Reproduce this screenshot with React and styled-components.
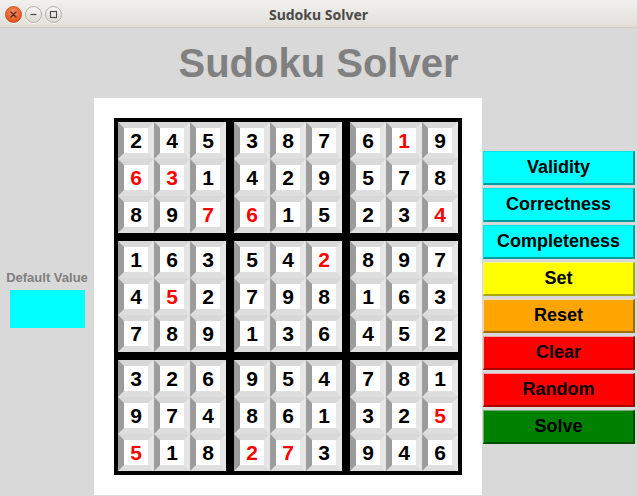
import React from "react";
import styled, { createGlobalStyle } from "styled-components";

const GlobalStyle = createGlobalStyle`
  html, body {
    margin: 0;
    padding: 0;
    width: 637px;
    height: 496px;
    overflow: hidden;
    background: #d9d9d9;
  }
  * { box-sizing: border-box; }
`;

const Window = styled.div`
  width: 637px;
  height: 496px;
  display: flex;
  flex-direction: column;
  background: #d9d9d9;
  font-family: "Liberation Sans", Arial, sans-serif;
`;

const TitleBar = styled.div`
  height: 28px;
  flex: none;
  display: grid;
  grid-template-columns: 1fr auto 1fr;
  align-items: center;
  background: linear-gradient(#f1f0ee, #e2dfda);
  border-bottom: 1px solid #cfcbc4;
`;

const Controls = styled.div`
  display: flex;
  gap: 3px;
  padding-left: 5px;
  padding-top: 2px;
`;

const CircleButton = styled.div`
  width: 17px;
  height: 17px;
  border-radius: 50%;
  display: flex;
  align-items: center;
  justify-content: center;
  background: ${(p) =>
    p.$close
      ? "radial-gradient(circle at 50% 35%, #f58f62, #e7561f 75%)"
      : "linear-gradient(#f7f6f4, #dcd8d2)"};
  border: 1px solid ${(p) => (p.$close ? "#c9521f" : "#b3aea6")};
  box-shadow: 0 1px 0 rgba(255, 255, 255, 0.7);
`;

const WindowTitle = styled.div`
  font-family: "Noto Sans", "DejaVu Sans", sans-serif;
  font-weight: 700;
  font-size: 14px;
  color: #4c4a47;
  padding-top: 1px;
`;

const Heading = styled.h1`
  margin: 0;
  padding: 12px 0 12px;
  height: 70px;
  line-height: 46px;
  text-align: center;
  font-size: 40px;
  font-weight: 700;
  color: #808080;
`;

const Main = styled.div`
  flex: 1;
  display: flex;
  align-items: stretch;
  min-height: 0;
`;

const SideColumn = styled.div`
  width: 94px;
  flex: none;
  display: flex;
  flex-direction: column;
  align-items: center;
  justify-content: center;
  padding-top: 4px;
`;

const SideLabel = styled.div`
  font-size: 13px;
  line-height: 15px;
  font-weight: 700;
  color: #808080;
  margin-bottom: 5px;
`;

const Swatch = styled.div`
  width: 75px;
  height: 38px;
  background: #00ffff;
`;

const BoardPanel = styled.div`
  width: 388px;
  flex: none;
  background: #ffffff;
  padding: 20px;
  margin-bottom: 1px;
`;

const Board = styled.div`
  display: grid;
  grid-template-columns: repeat(3, 108px);
  grid-template-rows: repeat(3, 111px);
  gap: 8px;
  padding: 4px;
  background: #000000;
  width: 348px;
`;

const Box = styled.div`
  display: grid;
  grid-template-columns: repeat(3, 36px);
  grid-template-rows: repeat(3, 37px);
`;

const Cell = styled.div`
  border-style: solid;
  border-width: 6px;
  border-top-color: #d8d8d8;
  border-left-color: #9c9c9c;
  border-right-color: #e6e6e6;
  border-bottom-color: #dedede;
  background: #ffffff;
  display: flex;
  align-items: center;
  justify-content: center;
  font-size: 21px;
  font-weight: 700;
  color: ${(p) => (p.$given ? "#000000" : "#ff0000")};
`;

const ButtonColumn = styled.div`
  width: 152px;
  flex: none;
  margin-left: 1px;
  display: flex;
  flex-direction: column;
  justify-content: center;
  gap: 3px;
  padding-top: 1px;
`;

const tones = {
  cyan: { bg: "#00ffff", light: "#00e6e6", dark: "#009c9c" },
  yellow: { bg: "#ffff00", light: "#f4f48a", dark: "#a8a800" },
  orange: { bg: "#ffa500", light: "#f2dba8", dark: "#a46a00" },
  red: { bg: "#ff0000", light: "#f3a6a6", dark: "#a80000" },
  green: { bg: "#008000", light: "#6fae6f", dark: "#004d00" },
};

const ActionButton = styled.button`
  height: 34px;
  width: 152px;
  margin: 0;
  padding: 0;
  font-family: "Liberation Sans", Arial, sans-serif;
  font-size: 18px;
  font-weight: 700;
  color: #000000;
  background: ${(p) => tones[p.$tone].bg};
  border-style: solid;
  border-width: 1px 2px 2px 1px;
  border-top-color: ${(p) => tones[p.$tone].light};
  border-left-color: ${(p) => tones[p.$tone].light};
  border-right-color: ${(p) => tones[p.$tone].dark};
  border-bottom-color: ${(p) => tones[p.$tone].dark};
  cursor: pointer;
`;

const grid = [
  "245387619",
  "631429578",
  "897615234",
  "163542897",
  "452798163",
  "789136452",
  "326954781",
  "974861325",
  "518273946",
];

const red = new Set([
  "0,7", "1,0", "1,1", "2,2", "2,3", "2,8", "3,5", "4,1", "7,8", "8,0", "8,3", "8,4",
]);

const buttons = [
  ["Validity", "cyan"],
  ["Correctness", "cyan"],
  ["Completeness", "cyan"],
  ["Set", "yellow"],
  ["Reset", "orange"],
  ["Clear", "red"],
  ["Random", "red"],
  ["Solve", "green"],
];

function CloseGlyph() {
  return (
    <svg width="9" height="9" viewBox="0 0 9 9">
      <path d="M2 2 L7 7 M7 2 L2 7" stroke="#5a2410" strokeWidth="1.3" strokeLinecap="round" />
    </svg>
  );
}

function MinGlyph() {
  return (
    <svg width="9" height="9" viewBox="0 0 9 9">
      <path d="M1.5 4.5 H7.5" stroke="#4a4844" strokeWidth="1.2" />
    </svg>
  );
}

function MaxGlyph() {
  return (
    <svg width="9" height="9" viewBox="0 0 9 9">
      <rect x="1.5" y="1.5" width="6" height="6" fill="none" stroke="#4a4844" strokeWidth="1.1" />
    </svg>
  );
}

export default function App() {
  const boxes = [];
  for (let br = 0; br < 3; br++) {
    for (let bc = 0; bc < 3; bc++) {
      const cells = [];
      for (let i = 0; i < 3; i++) {
        for (let j = 0; j < 3; j++) {
          const r = br * 3 + i;
          const c = bc * 3 + j;
          cells.push(
            <Cell key={`${r}-${c}`} $given={!red.has(`${r},${c}`)}>
              {grid[r][c]}
            </Cell>
          );
        }
      }
      boxes.push(<Box key={`${br}-${bc}`}>{cells}</Box>);
    }
  }

  return (
    <>
      <GlobalStyle />
      <Window>
        <TitleBar>
          <Controls>
            <CircleButton $close>
              <CloseGlyph />
            </CircleButton>
            <CircleButton>
              <MinGlyph />
            </CircleButton>
            <CircleButton>
              <MaxGlyph />
            </CircleButton>
          </Controls>
          <WindowTitle>Sudoku Solver</WindowTitle>
          <div />
        </TitleBar>
        <Heading>Sudoku Solver</Heading>
        <Main>
          <SideColumn>
            <SideLabel>Default Value</SideLabel>
            <Swatch />
          </SideColumn>
          <BoardPanel>
            <Board>{boxes}</Board>
          </BoardPanel>
          <ButtonColumn>
            {buttons.map(([label, tone]) => (
              <ActionButton key={label} $tone={tone}>
                {label}
              </ActionButton>
            ))}
          </ButtonColumn>
        </Main>
      </Window>
    </>
  );
}
